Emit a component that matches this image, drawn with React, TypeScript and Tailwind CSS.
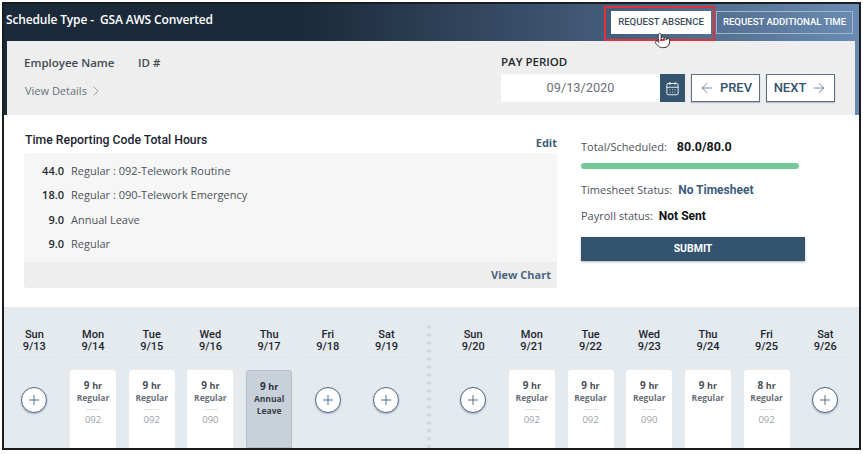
import { ArrowLeft, ArrowRight, ChevronRight, Plus, CalendarDays, Pointer } from "lucide-react";

type Day = {
  name: string;
  date: string;
  hours?: string;
  label?: string[];
  code?: string;
  leave?: boolean;
};

const weekOne: Day[] = [
  { name: "Sun", date: "9/13" },
  { name: "Mon", date: "9/14", hours: "9", label: ["Regular"], code: "092" },
  { name: "Tue", date: "9/15", hours: "9", label: ["Regular"], code: "092" },
  { name: "Wed", date: "9/16", hours: "9", label: ["Regular"], code: "090" },
  { name: "Thu", date: "9/17", hours: "9", label: ["Annual", "Leave"], leave: true },
  { name: "Fri", date: "9/18" },
  { name: "Sat", date: "9/19" },
];

const weekTwo: Day[] = [
  { name: "Sun", date: "9/20" },
  { name: "Mon", date: "9/21", hours: "9", label: ["Regular"], code: "092" },
  { name: "Tue", date: "9/22", hours: "9", label: ["Regular"], code: "092" },
  { name: "Wed", date: "9/23", hours: "9", label: ["Regular"], code: "090" },
  { name: "Thu", date: "9/24", hours: "9", label: ["Regular"] },
  { name: "Fri", date: "9/25", hours: "8", label: ["Regular"], code: "092" },
  { name: "Sat", date: "9/26" },
];

const codes = [
  { hours: "44.0", name: "Regular : 092-Telework Routine" },
  { hours: "18.0", name: "Regular : 090-Telework Emergency" },
  { hours: "9.0", name: "Annual Leave" },
  { hours: "9.0", name: "Regular" },
];

const DayColumn = ({ day }: { day: Day }) => (
  <div className="flex w-[58.7px] flex-col items-center">
    <div className="flex h-[29px] w-[46px] flex-col items-center border-b border-[#dfe4e9] font-['Roboto',sans-serif] text-[11px] leading-[12px] font-medium text-[#1c2530]">
      <span>{day.name}</span>
      <span>{day.date}</span>
    </div>
    {day.hours ? (
      <div
        className={`mt-[12px] flex h-[78px] w-[46px] flex-col items-center rounded-t-[3px] pt-[9px] font-['Open_Sans',sans-serif] ${
          day.leave ? "border border-[#b4bfc9] bg-[#c8d0d9]" : "bg-white"
        }`}
      >
        <div className={`text-[10px] leading-[12px] font-bold ${day.leave ? "text-[#2a3138]" : "text-[#4a5058]"}`}>
          {day.hours} <span className="text-[9px]">hr</span>
        </div>
        <div className={`text-center text-[8.5px] leading-[12px] font-bold ${day.leave ? "text-[#3a4148]" : "text-[#6a7078]"}`}>
          {day.label?.map((line) => (
            <div key={line}>{line}</div>
          ))}
        </div>
        {day.code && (
          <>
            <div className="mt-[5px] h-px w-[15px] bg-[#e4e6e8]" />
            <div className="mt-[3px] text-[9.5px] leading-[13px] text-[#9aa0a6]">{day.code}</div>
          </>
        )}
      </div>
    ) : (
      <button className="mt-[29px] flex h-[26px] w-[26px] items-center justify-center rounded-full border border-[#4f6a88] bg-white shadow-[0_1px_2px_rgba(50,80,110,0.35)]">
        <Plus size={16} strokeWidth={1.3} className="text-[#3f5a78]" />
      </button>
    )}
  </div>
);

const App = () => {
  return (
    <div className="relative h-[454px] w-[863px] overflow-hidden bg-white pt-[2px] pl-[2px]">
      <div className="h-[448px] w-[859px] overflow-hidden border-2 border-[#1a1c1f] bg-white">
        {/* Header and employee panel */}
        <div className="h-[111px] bg-gradient-to-r from-[#1b2a3b] from-[35%] to-[#6a8bb3]">
          <div className="flex h-[37px] justify-between pr-[6px] pl-[2px]">
            <div className="flex pt-[8px] font-['Open_Sans',sans-serif] text-[12px] leading-[16px] font-semibold tracking-[-0.15px] text-white">
              <span className="mr-[6px]">Schedule Type -</span>
              <span>GSA AWS Converted</span>
            </div>
            <div className="flex pt-[7px] font-['Roboto',sans-serif] text-[9.6px] font-medium">
              <button className="flex h-[23px] w-[100px] items-center justify-center bg-white text-[#3e4d5c]">
                REQUEST ABSENCE
              </button>
              <button className="ml-[5px] flex h-[23px] w-[137px] items-center justify-center border border-[#a4b6cc] text-white">
                REQUEST ADDITIONAL TIME
              </button>
            </div>
          </div>
          <div className="ml-[3px] mr-[4px] flex h-[74px] justify-between bg-[#eeeeee] pr-[20px] pl-[17px]">
            <div className="pt-[15px] font-['Open_Sans',sans-serif]">
              <div className="flex text-[11.5px] leading-[14px] font-semibold text-[#444b52]">
                <span className="w-[114px]">Employee Name</span>
                <span>ID #</span>
              </div>
              <div className="mt-[13px] flex items-center pl-[1px] text-[11px] leading-[14px] text-[#68727c]">
                View Details
                <ChevronRight size={16} strokeWidth={1} className="ml-[1px]" />
              </div>
            </div>
            <div className="pt-[14px]">
              <div className="font-['Open_Sans',sans-serif] text-[11.5px] leading-[14px] font-semibold text-[#22272c]">
                PAY PERIOD
              </div>
              <div className="mt-[5px] flex h-[28px] items-center">
                <div className="flex h-[28px] w-[159px] items-center justify-center bg-white font-['Roboto',sans-serif] text-[12.75px] text-[#6a7078]">
                  09/13/2020
                </div>
                <div className="flex h-[28px] w-[25px] items-center justify-center bg-[#33536f]">
                  <CalendarDays size={15} strokeWidth={1.4} className="text-white" />
                </div>
                <button className="ml-[6px] flex h-[28px] w-[69px] items-center justify-center gap-[5px] border border-[#587089] bg-white font-['Roboto',sans-serif] text-[13px] font-medium text-[#33536f] shadow-[0_1px_1px_rgba(50,80,110,0.3)]">
                  <ArrowLeft size={16} strokeWidth={1} />
                  PREV
                </button>
                <button className="ml-[6px] flex h-[28px] w-[69px] items-center justify-center gap-[5px] border border-[#587089] bg-white font-['Roboto',sans-serif] text-[13px] font-medium text-[#33536f] shadow-[0_1px_1px_rgba(50,80,110,0.3)]">
                  NEXT
                  <ArrowRight size={16} strokeWidth={1} />
                </button>
              </div>
            </div>
          </div>
        </div>

        {/* Totals */}
        <div className="ml-[2px] mr-[4px] flex h-[192px] bg-white">
          <div className="ml-[18px] w-[533px]">
            <div className="relative h-[38px] pt-[17px] pl-[1px] font-['Roboto',sans-serif] text-[12.25px] leading-[16px] font-medium text-[#1c2530]">
              Time Reporting Code Total Hours
              <span className="absolute top-[20px] right-0 font-['Open_Sans',sans-serif] text-[11px] font-bold text-[#3d5d7c]">
                Edit
              </span>
            </div>
            <div className="overflow-hidden rounded-[3px] bg-[#f6f6f6]">
              <div className="h-[109px] pt-[6px] pl-[16px] font-['Open_Sans',sans-serif] text-[11px] leading-[24.3px] text-[#4d545b]">
                {codes.map((row) => (
                  <div key={row.name} className="flex">
                    <span className="w-[24px] text-right font-semibold text-[#25292d]">{row.hours}</span>
                    <span className="ml-[7px]">{row.name}</span>
                  </div>
                ))}
              </div>
              <div className="flex h-[26px] items-center justify-end bg-[#eeeeee] pt-[1px] pr-[6px] font-['Open_Sans',sans-serif] text-[11px] font-bold text-[#4a6682]">
                View Chart
              </div>
            </div>
          </div>
          <div className="ml-[24px] w-[224px] pt-[24px] font-['Open_Sans',sans-serif] text-[11px] leading-[16px] text-[#4d545b]">
            <div className="flex items-center">
              Total/Scheduled:
              <span className="ml-[10px] font-['Roboto',sans-serif] text-[12.5px] font-bold text-[#15191d]">80.0/80.0</span>
            </div>
            <div className="mt-[8px] h-[6px] w-[218px] rounded-full bg-[#75c998]" />
            <div className="mt-[13px] flex items-center">
              Timesheet Status:
              <span className="ml-[6px] font-['Roboto',sans-serif] text-[12px] font-bold text-[#3d5d7c]">No Timesheet</span>
            </div>
            <div className="mt-[10px] flex items-center">
              Payroll status:
              <span className="ml-[6px] font-['Roboto',sans-serif] text-[12px] font-bold text-[#111]">Not Sent</span>
            </div>
            <button className="mt-[13px] flex h-[24px] w-[224px] items-center justify-center bg-[#33536f] font-['Roboto',sans-serif] text-[10.5px] font-bold text-white shadow-[0_1px_2px_rgba(0,0,0,0.3)]">
              SUBMIT
            </button>
          </div>
        </div>

        {/* Calendar */}
        <div className="flex h-[145px] items-start bg-[#e5eaef] pt-[22px] pl-[1px]">
          <div className="flex">
            {weekOne.map((day) => (
              <DayColumn key={day.date} day={day} />
            ))}
          </div>
          <div className="mt-[-4px] ml-[11px] h-[124px] border-l-[4px] border-dotted border-[#d0d7de]" />
          <div className="ml-[13px] flex">
            {weekTwo.map((day) => (
              <DayColumn key={day.date} day={day} />
            ))}
          </div>
        </div>
      </div>

      {/* Annotation and cursor from the capture */}
      <div className="absolute top-[6px] left-[604px] h-[35px] w-[111px] border-2 border-[#e0323c]" />
      <Pointer size={17} strokeWidth={1.2} fill="#ffffff" className="absolute top-[32px] left-[654px] text-[#222]" />
    </div>
  );
};

export default App;
